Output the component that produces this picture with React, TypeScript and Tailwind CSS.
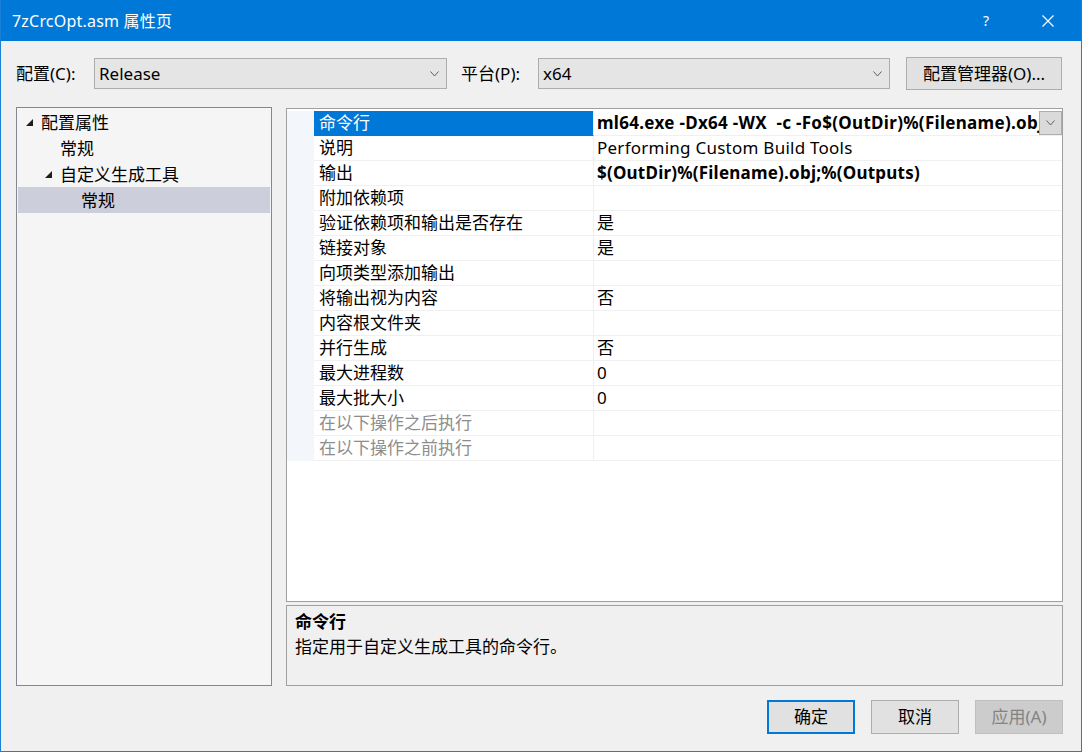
import React from 'react';

const FONT = { fontFamily: '"Noto Sans", "Noto Sans CJK SC", sans-serif' };

const ROWS: { name: string; value: string; bold?: boolean; disabled?: boolean }[] = [
  { name: '命令行', value: 'ml64.exe -Dx64 -WX  -c -Fo$(OutDir)%(Filename).obj "%(FullPath)"', bold: true },
  { name: '说明', value: 'Performing Custom Build Tools' },
  { name: '输出', value: '$(OutDir)%(Filename).obj;%(Outputs)', bold: true },
  { name: '附加依赖项', value: '' },
  { name: '验证依赖项和输出是否存在', value: '是' },
  { name: '链接对象', value: '是' },
  { name: '向项类型添加输出', value: '' },
  { name: '将输出视为内容', value: '否' },
  { name: '内容根文件夹', value: '' },
  { name: '并行生成', value: '否' },
  { name: '最大进程数', value: '0' },
  { name: '最大批大小', value: '0' },
  { name: '在以下操作之后执行', value: '', disabled: true },
  { name: '在以下操作之前执行', value: '', disabled: true },
];

function Chevron({ className = '' }: { className?: string }) {
  return (
    <svg width="9" height="6" viewBox="0 0 9 6" className={className}>
      <polyline points="0.5,0.5 4.5,5 8.5,0.5" fill="none" stroke="#606060" strokeWidth="1" />
    </svg>
  );
}

function Expander() {
  return (
    <svg width="7" height="7" viewBox="0 0 7 7" className="shrink-0">
      <polygon points="7,0 7,7 0,7" fill="#1e1e1e" />
    </svg>
  );
}

function Select({ value, width }: { value: string; width: string }) {
  return (
    <div className={`${width} h-[31px] bg-[#e5e5e5] border border-[#adadad] flex items-center pl-[4px] pr-[7px]`}>
      <span className="flex-1 text-[17px] text-black">{value}</span>
      <Chevron />
    </div>
  );
}

function TreeRow({ level, label, expander, selected, h }: { level: number; label: string; expander?: boolean; selected?: boolean; h: string }) {
  const pad = ['pl-[8px]', 'pl-[27px]', 'pl-[63px]'][level];
  return (
    <div className={`${h} flex items-center ${pad} ${selected ? 'bg-[#cccedb]' : ''}`}>
      {expander && <Expander />}
      {!expander && level < 2 && <span className="w-[7px]" />}
      <span className={`text-[17px] text-black ${level === 2 ? 'ml-0' : 'ml-[8px]'} leading-none`}>{label}</span>
    </div>
  );
}

export default function App() {
  return (
    <div style={FONT} className="w-[1082px] h-[752px] bg-[#f0f0f0] border-x border-b border-[#1a80d6] flex flex-col overflow-hidden">
      <div className="h-[41px] bg-[#0078d7] flex items-center pl-[11px] pr-[27px] text-white shrink-0">
        <span className="flex-1 text-[16px] tracking-[0.2px]">7zCrcOpt.asm 属性页</span>
        <span className="text-[14px] mr-[53px]">?</span>
        <svg width="12" height="12" viewBox="0 0 12 12">
          <path d="M0.5 0.5 L11.5 11.5 M11.5 0.5 L0.5 11.5" stroke="white" strokeWidth="1.2" />
        </svg>
      </div>

      <div className="flex-1 flex flex-col pl-[15px]">
        <div className="mt-[16px] h-[33px] flex items-center">
          <span className="text-[17px] w-[78px] text-black">配置(C):</span>
          <Select value="Release" width="w-[353px]" />
          <span className="text-[17px] ml-[14px] w-[77px] text-black">平台(P):</span>
          <Select value="x64" width="w-[352px]" />
          <div className="ml-[16px] w-[156px] h-[33px] bg-[#e1e1e1] border border-[#adadad] flex items-center justify-center text-[17px] text-black">
            配置管理器(O)...
          </div>
        </div>

        <div className="mt-[17px] h-[579px] flex">
          <div className="w-[256px] h-full bg-[#f5f5f5] border border-[#828790] pt-[1px] px-[1px]">
            <TreeRow level={0} label="配置属性" expander h="h-[26px]" />
            <TreeRow level={1} label="常规" h="h-[26px]" />
            <TreeRow level={1} label="自定义生成工具" expander h="h-[26px]" />
            <TreeRow level={2} label="常规" selected h="h-[26px]" />
          </div>

          <div className="ml-[14px] w-[777px] flex flex-col">
            <div className="mt-[1px] h-[494px] bg-white border border-[#a0a0a0] pt-[2px]">
              {ROWS.map((r, i) => (
                <div key={r.name} className="h-[25px] flex">
                  <div className="w-[27px] bg-[#f3f6fb]" />
                  <div
                    className={`w-[280px] border-r border-b border-[#f0f0f0] pl-[5px] flex items-center text-[17px] ${
                      i === 0 ? 'bg-[#0078d7] text-white border-b-[#0078d7]' : r.disabled ? 'text-[#8d8d8d]' : 'text-black'
                    }`}
                  >
                    {r.name}
                  </div>
                  <div className="flex-1 min-w-0 border-b border-[#f0f0f0] pl-[3px] flex items-center relative">
                    <span
                      className={`text-[17px] text-black whitespace-pre overflow-hidden ${
                        i === 0 ? 'font-bold tracking-[0.3px] w-[442px]' : r.bold ? 'font-bold tracking-[0.22px]' : 'tracking-[0.25px]'
                      }`}
                    >
                      {r.value}
                    </span>
                    {i === 0 && (
                      <div className="absolute right-0 top-0 w-[23px] h-[24px] bg-[#dadada] border border-[#adadad] flex items-center justify-center">
                        <Chevron />
                      </div>
                    )}
                  </div>
                </div>
              ))}
            </div>
            <div className="mt-[3px] h-[81px] bg-[#f0f0f0] border border-[#a0a0a0] pl-[8px] pt-[3px]">
              <div className="text-[17px] font-bold text-black leading-[25px]">命令行</div>
              <div className="text-[17px] text-black leading-[25px]">指定用于自定义生成工具的命令行。</div>
            </div>
          </div>
        </div>

        <div className="mt-[14px] flex pl-[751px]">
          <div className="w-[88px] h-[34px] bg-[#e1e1e1] border-2 border-[#0078d7] flex items-center justify-center text-[17px] text-black">确定</div>
          <div className="ml-[16px] w-[88px] h-[34px] bg-[#e1e1e1] border border-[#adadad] flex items-center justify-center text-[17px] text-black">取消</div>
          <div className="ml-[16px] w-[88px] h-[34px] bg-[#cccccc] border border-[#bfbfbf] flex items-center justify-center text-[17px] text-[#838383]">应用(A)</div>
        </div>
      </div>
    </div>
  );
}
